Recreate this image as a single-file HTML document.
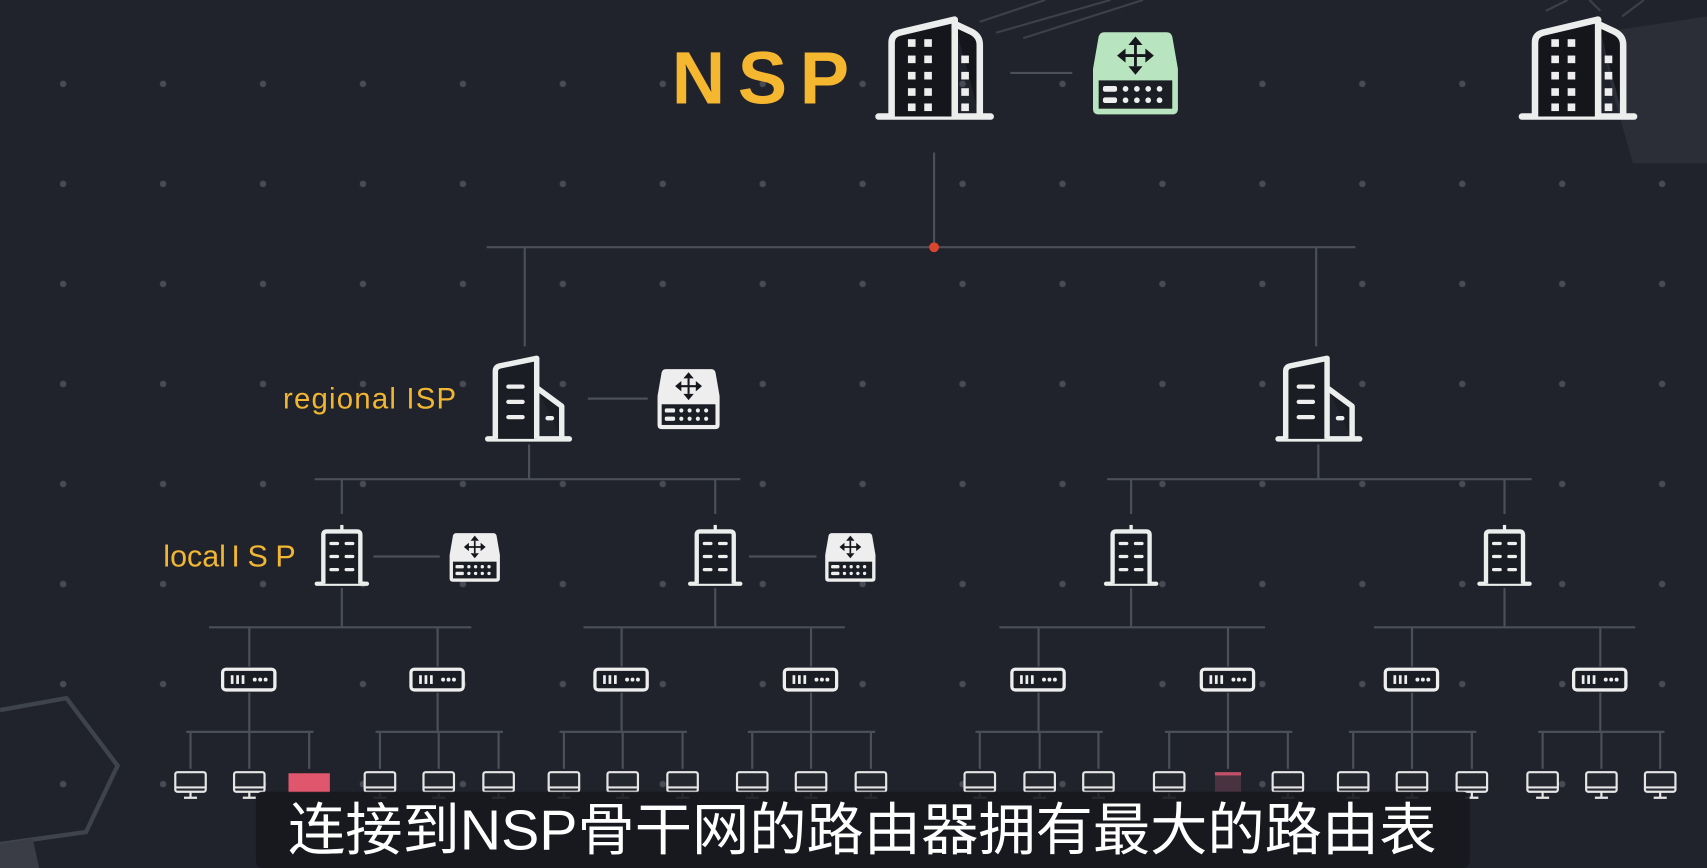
<!DOCTYPE html>
<html><head><meta charset="utf-8"><style>
html,body{margin:0;padding:0;background:#20232b;overflow:hidden}
svg{display:block}
</style></head><body>
<svg width="1707" height="868" viewBox="0 0 1568 797" xmlns="http://www.w3.org/2000/svg" preserveAspectRatio="none">
<defs>
<pattern id="dotp" patternUnits="userSpaceOnUse" x="12.1" y="31.05" width="91.8" height="91.85">
 <circle cx="45.9" cy="45.95" r="3" fill="#484b53"/>
</pattern>
<g id="bigb">
 <path d="M0 93H103" stroke="#eceded" stroke-width="6" stroke-linecap="round"/>
 <path d="M12 93V25Q12 18 19 16L70 4V93M70 8L85 15Q93 19 93 27V93" fill="#14161b" stroke="#eceded" stroke-width="6" stroke-linejoin="round"/>
 <g fill="#eee">
  <rect x="27" y="22" width="7" height="7"/><rect x="42" y="22" width="7" height="7"/>
  <rect x="27" y="37" width="7" height="7"/><rect x="42" y="37" width="7" height="7"/>
  <rect x="27" y="52" width="7" height="7"/><rect x="42" y="52" width="7" height="7"/>
  <rect x="27" y="67" width="7" height="7"/><rect x="42" y="67" width="7" height="7"/>
  <rect x="27" y="81" width="7" height="7"/><rect x="42" y="81" width="7" height="7"/>
  <rect x="76" y="37" width="7" height="7"/><rect x="76" y="52" width="7" height="7"/>
  <rect x="76" y="67" width="7" height="7"/><rect x="76" y="81" width="7" height="7"/>
 </g>
</g>
<g id="regb">
 <path d="M0 74H75" stroke="#eceded" stroke-width="5" stroke-linecap="round"/>
 <path d="M7 74V12Q7 8 11 7L45 0V74M45 27L68 44V74" fill="#1a1d23" stroke="#eceded" stroke-width="5" stroke-linejoin="round"/>
 <g stroke="#eee" stroke-width="4" stroke-linecap="round">
  <path d="M19 26H32M19 40H32M19 54H32M55 55H59"/>
 </g>
</g>
<g id="locb">
 <path d="M0 54H46" stroke="#eceded" stroke-width="4" stroke-linecap="round"/>
 <path d="M23 0V6" stroke="#eceded" stroke-width="3"/>
 <path d="M6 54V9Q6 6 9 6H37Q40 6 40 9V54" fill="#1a1d23" stroke="#eceded" stroke-width="4"/>
 <g stroke="#eee" stroke-width="3" stroke-linecap="round">
  <path d="M13 17H19M27 17H33M13 29H19M27 29H33M13 41H19M27 41H33"/>
 </g>
</g>
<g id="rt">
 <path d="M8 2H52Q55 2 56 5L60 28V56Q60 60 56 60H4Q0 60 0 56V28L4 5Q5 2 8 2Z"/>
 <rect x="4" y="36" width="52" height="20" fill="#1b1e24"/>
 <g fill="#eee">
  <rect x="7" y="40" width="10" height="4" rx="1.5"/><rect x="7" y="48" width="10" height="4" rx="1.5"/>
  <circle cx="23" cy="42" r="2"/><circle cx="31" cy="42" r="2"/><circle cx="39" cy="42" r="2"/><circle cx="47" cy="42" r="2"/>
  <circle cx="23" cy="50" r="2"/><circle cx="31" cy="50" r="2"/><circle cx="39" cy="50" r="2"/><circle cx="47" cy="50" r="2"/>
 </g>
 <g fill="#15171c">
  <path d="M29 11H31V26H29Z M22 17.5H38V19.5H22Z"/>
  <path d="M30 5L35 11H25Z M30 32L35 26H25Z M17 18.5L23 13.5V23.5Z M43 18.5L37 13.5V23.5Z"/>
 </g>
</g>
<g id="sw">
 <rect x="1.5" y="1.5" width="48" height="19" rx="3" fill="#1a1d23" stroke="#eee" stroke-width="3"/>
 <g fill="#eee"><rect x="9" y="7" width="2.5" height="8"/><rect x="14" y="7" width="2.5" height="8"/><rect x="19" y="7" width="2.5" height="8"/>
 <circle cx="31" cy="11" r="1.8"/><circle cx="36" cy="11" r="1.8"/><circle cx="41" cy="11" r="1.8"/></g>
</g>
<g id="mon">
 <rect x="1" y="1" width="28" height="18" rx="2" fill="#24272e" stroke="#e6e6e6" stroke-width="2"/>
 <path d="M1 15H29M15 19V24M9 24.5H21" stroke="#e6e6e6" stroke-width="2"/>
</g>
</defs>

<rect width="1568" height="797" fill="#20232b"/>
<rect x="0" y="0" width="1568" height="745" fill="url(#dotp)"/>
<path d="M0 652L61 641L108 703L79 764L0 775" fill="none" stroke="#3f434c" stroke-width="4"/>
<path d="M0 775L30 770L36 797H0Z" fill="#3a3d45"/>
<path d="M1470 30L1568 15V150L1500 150L1480 80Z" fill="#2b2e36"/>
<g stroke="#3d4049" stroke-width="2">
 <path d="M900 20L960 0M915 30L1020 0M940 35L1050 0"/>
 <path d="M1420 10L1440 0M1470 10L1460 0M1490 15L1510 0"/>
</g>

<g stroke="#4b4f58" stroke-width="2" fill="none">
 <path d="M928 67H985"/>
 <path d="M858 140V228M447 227H1245M482 227V318M1209 227V318"/>
 <path d="M540 366H595"/>
 <path d="M486 408V440M289 440H680M1211 408V440M1017 440H1407"/>
 <path d="M314 440V472M657 440V472M1039 440V472M1382 440V472"/>
 <path d="M343 511H404M688 511H750"/>
 <path d="M314 540V576M657 540V576M1039 540V576M1382 540V576"/>
 <path d="M192 576H433M536 576H776M918 576H1162M1262 576H1502"/>
 <path d="M229 576V612M402 576V612M571 576V612M745 576V612M954 576V612M1128 576V612M1297 576V612M1470 576V612"/>
 <path d="M229 636V672M402 636V672M571 636V672M745 636V672M954 636V672M1128 636V672M1297 636V672M1470 636V672"/>
 <path d="M171 672H288M345 672H462M514 672H631M687 672H804M896 672H1013M1070 672H1187M1239 672H1356M1413 672H1529"/>
 <path d="M175 672V706M229 672V706M284 672V706M349 672V706M403 672V706M458 672V706M518 672V706M572 672V706M627 672V706M691 672V706M745 672V706M800 672V706M900 672V706M955 672V706M1009 672V706M1074 672V706M1128 672V706M1183 672V706M1243 672V706M1297 672V706M1352 672V706M1417 672V706M1471 672V706M1525 672V706"/>
</g>
<circle cx="858" cy="227" r="4.5" fill="#d9452f"/>

<use href="#bigb" x="807" y="14"/>
<use href="#bigb" x="1398" y="14"/>
<g transform="translate(1004,27) scale(1.3)" fill="#b9e4c0"><use href="#rt"/></g>
<use href="#regb" x="448" y="329"/>
<use href="#regb" x="1174" y="329"/>
<g transform="translate(604,337) scale(0.95)" fill="#eeeeee"><use href="#rt"/></g>
<use href="#locb" x="291" y="482"/>
<use href="#locb" x="634" y="482"/>
<use href="#locb" x="1016" y="482"/>
<use href="#locb" x="1359" y="482"/>
<g transform="translate(413,488) scale(0.77)" fill="#eeeeee"><use href="#rt"/></g>
<g transform="translate(758,488) scale(0.77)" fill="#eeeeee"><use href="#rt"/></g>
<use href="#sw" x="203" y="613"/><use href="#sw" x="376" y="613"/>
<use href="#sw" x="545" y="613"/><use href="#sw" x="719" y="613"/>
<use href="#sw" x="928" y="613"/><use href="#sw" x="1102" y="613"/>
<use href="#sw" x="1271" y="613"/><use href="#sw" x="1444" y="613"/>
<g>
 <use href="#mon" x="160" y="708"/><use href="#mon" x="214" y="708"/>
 <use href="#mon" x="334" y="708"/><use href="#mon" x="388" y="708"/><use href="#mon" x="443" y="708"/>
 <use href="#mon" x="503" y="708"/><use href="#mon" x="557" y="708"/><use href="#mon" x="612" y="708"/>
 <use href="#mon" x="676" y="708"/><use href="#mon" x="730" y="708"/><use href="#mon" x="785" y="708"/>
 <use href="#mon" x="885" y="708"/><use href="#mon" x="940" y="708"/><use href="#mon" x="994" y="708"/>
 <use href="#mon" x="1059" y="708"/><use href="#mon" x="1168" y="708"/>
 <use href="#mon" x="1228" y="708"/><use href="#mon" x="1282" y="708"/><use href="#mon" x="1337" y="708"/>
 <use href="#mon" x="1402" y="708"/><use href="#mon" x="1456" y="708"/><use href="#mon" x="1510" y="708"/>
</g>
<rect x="265" y="710" width="38" height="18" fill="#e0566c"/>
<rect x="1116" y="709" width="24" height="18" fill="#4a3340"/>
<rect x="1116" y="709" width="24" height="3" fill="#c25068"/>

<text x="617" y="95" font-family="Liberation Sans, sans-serif" font-weight="bold" font-size="68" fill="#f5b630" textLength="163" lengthAdjust="spacing">NSP</text>
<text x="260" y="375" font-family="Liberation Sans, sans-serif" font-size="27" fill="#f1b632" textLength="159">regional ISP</text>
<text x="150" y="520" font-family="Liberation Sans, sans-serif" font-size="28" fill="#f1b632">local<tspan dx="5" letter-spacing="7">ISP</tspan></text>

<rect x="235" y="727" width="1115" height="70" rx="6" fill="#17191e" fill-opacity="0.92"/>
<text x="792" y="780" text-anchor="middle" font-family="Liberation Sans, 'Noto Sans CJK SC', sans-serif" font-size="52" fill="#ffffff" textLength="1055" lengthAdjust="spacingAndGlyphs">连接到NSP骨干网的路由器拥有最大的路由表</text>
</svg>
</body></html>
